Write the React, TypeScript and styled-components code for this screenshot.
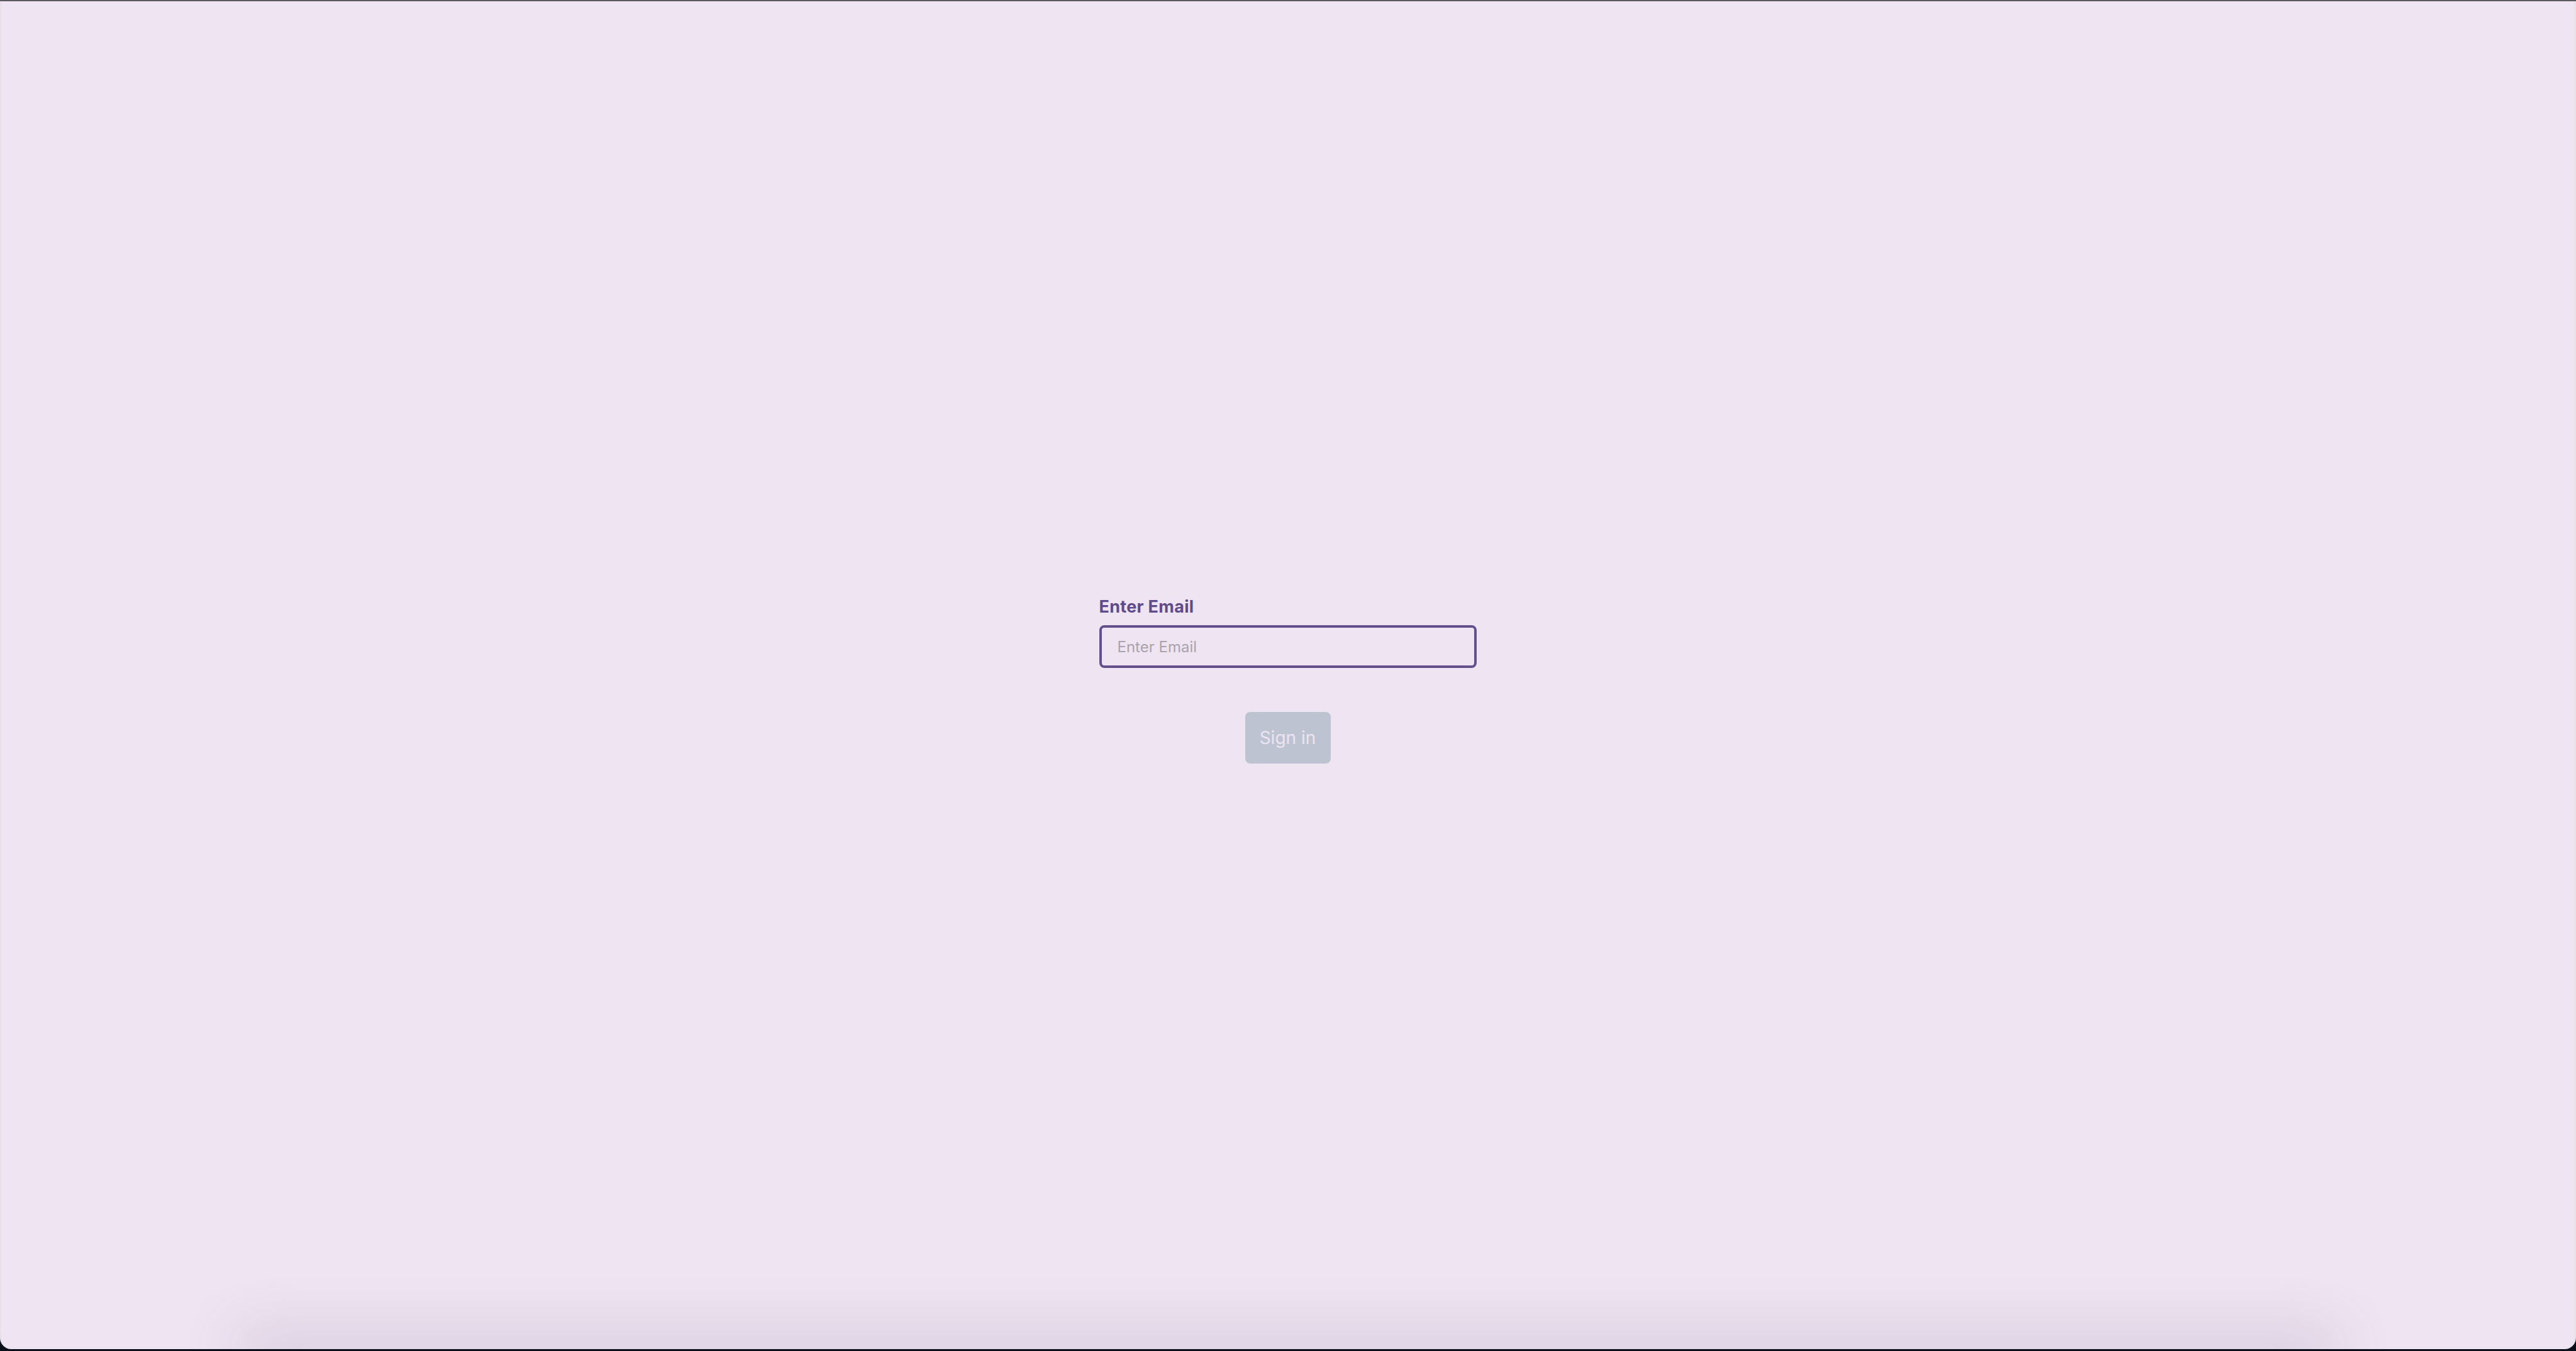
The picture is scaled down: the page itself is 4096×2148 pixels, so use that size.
import React from "react";
import styled, { createGlobalStyle } from "styled-components";

const GlobalStyle = createGlobalStyle`
  html, body {
    margin: 0;
    padding: 0;
    background: #0b0f19;
  }
  * { box-sizing: border-box; }
`;

const Screen = styled.div`
  width: 4096px;
  height: 2148px;
  display: flex;
  flex-direction: column;
  background: #0b0f19;
  font-family: Inter, "Noto Sans", "Liberation Sans", sans-serif;
`;

const TopBar = styled.div`
  height: 2px;
  flex: none;
  background: #5b5a60;
`;

const Window = styled.div`
  flex: 1;
  margin-bottom: 3px;
  display: flex;
  flex-direction: column;
  align-items: center;
  background: #efe4f2;
  border-left: 2px solid #e7e1e8;
  border-right: 3px solid #e7e1e8;
  border-radius: 0 0 18px 18px;
  overflow: hidden;
`;

const Main = styled.main`
  flex: 1;
  align-self: stretch;
  display: flex;
  align-items: center;
  justify-content: center;
  padding-top: 16px;
`;

const Form = styled.form`
  display: flex;
  flex-direction: column;
  align-items: center;
  width: 600px;
  margin: 0;
`;

const Field = styled.div`
  display: flex;
  flex-direction: column;
  align-self: stretch;
  gap: 13px;
`;

const Label = styled.label`
  font-size: 27px;
  line-height: 32px;
  font-weight: 700;
  letter-spacing: 0.3px;
  color: #5f4b8b;
`;

const EmailInput = styled.input`
  width: 600px;
  height: 68px;
  margin: 0;
  padding: 0 24px 0 25px;
  border: 4px solid #634f8c;
  border-radius: 8px;
  background: transparent;
  font-family: inherit;
  font-size: 24px;
  color: #3b3245;
  outline: none;

  &::placeholder {
    color: #a8a3ac;
  }
`;

const SignInButton = styled.button`
  margin-top: 70px;
  width: 136px;
  height: 82px;
  padding: 0;
  border: none;
  border-radius: 8px;
  background: #bec3d1;
  color: #ece4f1;
  font-family: inherit;
  font-size: 28px;
  font-weight: 400;
  cursor: not-allowed;
`;

const BottomShade = styled.div`
  flex: none;
  width: 3300px;
  height: 0;
  box-shadow: 0 0 90px 18px rgba(110, 98, 120, 0.32);
`;

export default function App() {
  return (
    <>
      <GlobalStyle />
      <Screen>
        <TopBar />
        <Window>
          <Main>
            <Form onSubmit={(e) => e.preventDefault()}>
              <Field>
                <Label htmlFor="email">Enter Email</Label>
                <EmailInput id="email" type="email" placeholder="Enter Email" />
              </Field>
              <SignInButton type="submit" disabled>
                Sign in
              </SignInButton>
            </Form>
          </Main>
          <BottomShade />
        </Window>
      </Screen>
    </>
  );
}
